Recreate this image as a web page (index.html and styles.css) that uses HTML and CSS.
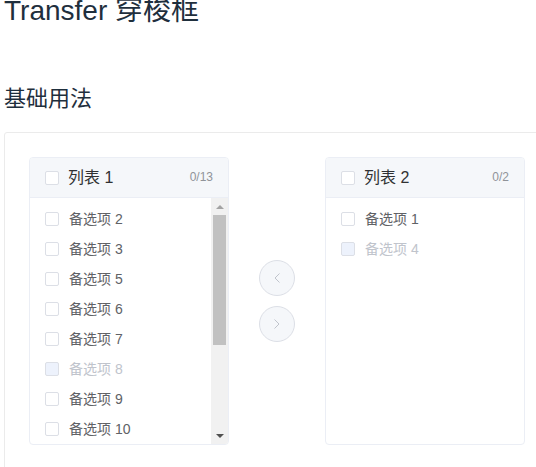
FILE: index.html
```html
<!DOCTYPE html>
<html lang="zh-CN">
<head>
  <meta charset="UTF-8" />
  <title>Transfer 穿梭框</title>
  <meta name="viewport" content="width=device-width, initial-scale=1.0" />
  <link rel="stylesheet" href="styles.css">
</head>
<body>
  <div class="page">
    <h2 class="page-title">Transfer 穿梭框</h2>
    <h3 class="section-title">基础用法</h3>

    <div class="demo-block">
      <div class="transfer">
        <div class="panel">
          <div class="panel-header">
            <label class="checkbox"><span class="box"></span><span class="label">列表 1</span></label>
            <span class="count">0/13</span>
          </div>
          <div class="panel-body">
            <div class="list">
              <label class="item"><span class="box"></span><span class="label">备选项 2</span></label>
              <label class="item"><span class="box"></span><span class="label">备选项 3</span></label>
              <label class="item"><span class="box"></span><span class="label">备选项 5</span></label>
              <label class="item"><span class="box"></span><span class="label">备选项 6</span></label>
              <label class="item"><span class="box"></span><span class="label">备选项 7</span></label>
              <label class="item disabled"><span class="box"></span><span class="label">备选项 8</span></label>
              <label class="item"><span class="box"></span><span class="label">备选项 9</span></label>
              <label class="item"><span class="box"></span><span class="label">备选项 10</span></label>
            </div>
            <div class="scrollbar">
              <span class="sb-btn up"></span>
              <div class="sb-track"><div class="sb-thumb" style="height:130px"></div></div>
              <span class="sb-btn down"></span>
            </div>
          </div>
        </div>

        <div class="buttons">
          <button class="move-btn" disabled>
            <svg width="14" height="14" viewBox="0 0 14 14"><path d="M9.5 2.5 L5 7 L9.5 11.5" fill="none" stroke="#c0c4cc" stroke-width="1"/></svg>
          </button>
          <button class="move-btn" disabled>
            <svg width="14" height="14" viewBox="0 0 14 14"><path d="M4.5 2.5 L9 7 L4.5 11.5" fill="none" stroke="#c0c4cc" stroke-width="1"/></svg>
          </button>
        </div>

        <div class="panel">
          <div class="panel-header">
            <label class="checkbox"><span class="box"></span><span class="label">列表 2</span></label>
            <span class="count">0/2</span>
          </div>
          <div class="panel-body">
            <div class="list">
              <label class="item"><span class="box"></span><span class="label">备选项 1</span></label>
              <label class="item disabled"><span class="box"></span><span class="label">备选项 4</span></label>
            </div>
          </div>
        </div>
      </div>
    </div>
  </div>
</body>
</html>
```

FILE: styles.css
```css
html, body {
  margin: 0;
  overflow: hidden;
  background: #fff;
}

body {
  font-family: "Liberation Sans", "Noto Sans CJK SC", sans-serif;
  color: #1f2f3d;
}

.page {
  width: 640px;
  padding-left: 4px;
}

.page-title {
  margin: 0;
  font-size: 28px;
  font-weight: 400;
  line-height: 22px;
}

.section-title {
  margin: 66px 0 22px;
  font-size: 22px;
  font-weight: 400;
  line-height: 22px;
}

.demo-block {
  border: 1px solid #ebebeb;
  border-radius: 3px;
  padding: 24px;
}

.transfer {
  display: flex;
  align-items: center;
}

.panel {
  width: 200px;
  box-sizing: border-box;
  border: 1px solid #ebeef5;
  border-radius: 4px;
  background: #fff;
  overflow: hidden;
}

.panel-header {
  height: 40px;
  box-sizing: border-box;
  background: #f5f7fa;
  border-bottom: 1px solid #ebeef5;
  padding: 0 15px;
  display: flex;
  align-items: center;
  justify-content: space-between;
}

.checkbox, .item {
  display: flex;
  align-items: center;
  cursor: pointer;
}

.box {
  width: 14px;
  height: 14px;
  box-sizing: border-box;
  border: 1px solid #dcdfe6;
  border-radius: 2px;
  background: #fff;
  flex: none;
}

.label {
  padding-left: 10px;
  padding-bottom: 2px;
}

.checkbox .label {
  font-size: 16px;
  color: #303133;
  padding-left: 9px;
  padding-bottom: 3px;
}

.count {
  font-size: 12px;
  color: #909399;
  padding-bottom: 1px;
}

.panel-body {
  height: 246px;
  display: flex;
}

.list {
  flex: 1;
  padding: 6px 0;
  overflow: hidden;
}

.item {
  height: 30px;
  padding-left: 15px;
  font-size: 14px;
  color: #606266;
}

.item.disabled {
  color: #c0c4cc;
  cursor: not-allowed;
}

.item.disabled .box {
  background: #edf2fc;
}

/* fake classic scrollbar */
.scrollbar {
  width: 17px;
  background: #f1f1f1;
  display: flex;
  flex-direction: column;
}

.sb-btn {
  height: 17px;
  display: flex;
  align-items: center;
  justify-content: center;
}

.sb-btn::before {
  content: "";
  border-left: 4px solid transparent;
  border-right: 4px solid transparent;
}

.sb-btn.up::before {
  border-bottom: 4px solid #a3a3a3;
}

.sb-btn.down::before {
  border-top: 4px solid #505050;
}

.sb-track {
  flex: 1;
}

.sb-thumb {
  margin: 0 2px;
  background: #c1c1c1;
}

.buttons {
  padding: 0 30px;
  display: flex;
  flex-direction: column;
  gap: 10px;
}

.move-btn {
  width: 36px;
  height: 36px;
  padding: 0;
  border: 1px solid #dcdfe6;
  border-radius: 50%;
  background: #f5f7fa;
  display: flex;
  align-items: center;
  justify-content: center;
  cursor: not-allowed;
}
```
